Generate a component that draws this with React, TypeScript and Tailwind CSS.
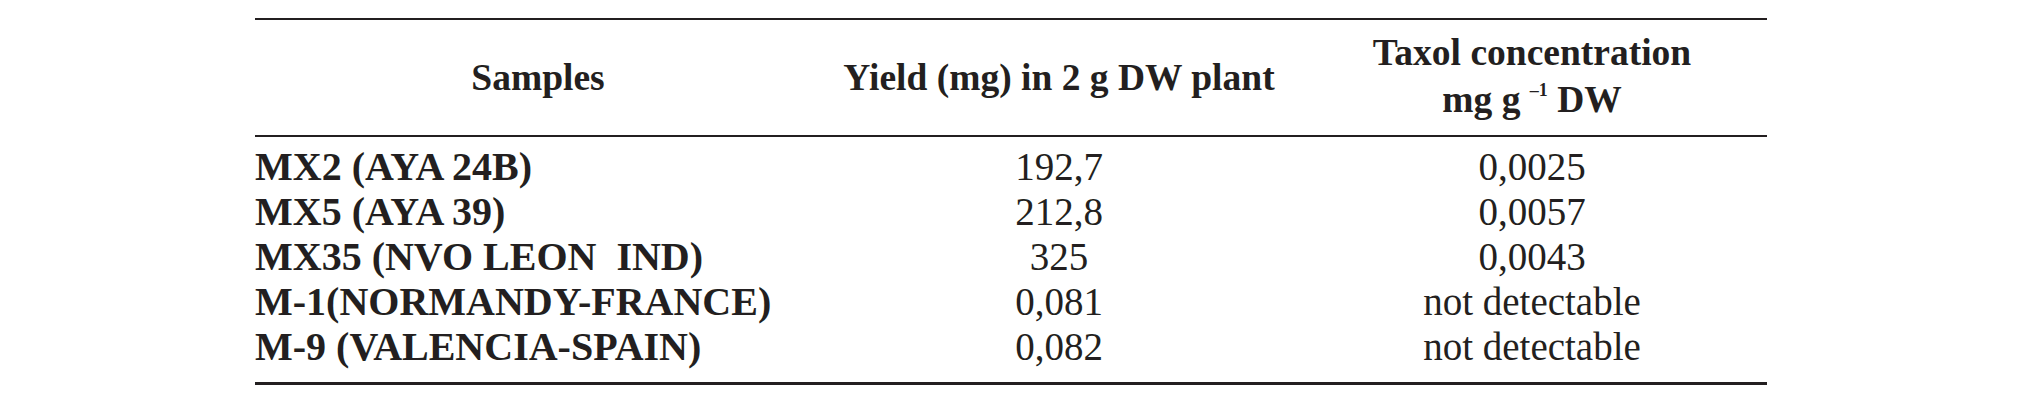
import React from "react";

const rows = [
  { s: "MX2 (AYA 24B)", y: "192,7", t: "0,0025" },
  { s: "MX5 (AYA 39)", y: "212,8", t: "0,0057" },
  { s: "MX35 (NVO LEON  IND)", y: "325", t: "0,0043" },
  { s: "M-1(NORMANDY-FRANCE)", y: "0,081", t: "not detectable" },
  { s: "M-9 (VALENCIA-SPAIN)", y: "0,082", t: "not detectable" },
];

export default function App() {
  return (
    <div className="w-[2018px] h-[401px] bg-white pt-[18px] pl-[255px] text-[#231f20] font-['Liberation_Serif',serif]">
      <div className="w-[1512px] border-t-2 border-b-[3px] border-[#231f20]">
        <div className="grid grid-cols-[566px_476px_470px] h-[117px] border-b-2 border-[#231f20] font-bold text-[37.5px] leading-[47px]">
          <div className="flex items-center justify-center">Samples</div>
          <div className="flex items-center justify-center">Yield (mg) in 2 g DW plant</div>
          <div className="flex flex-col items-center justify-center pb-[4px]">
            <div>Taxol concentration</div>
            <div className="whitespace-pre">
              mg g <span className="text-[18px] leading-none align-[0.9em]">–1</span> DW
            </div>
          </div>
        </div>
        <div className="pt-[7px] pb-[13px] text-[39px] leading-[45px]">
          {rows.map((r) => (
            <div key={r.s} className="grid grid-cols-[566px_476px_470px] items-baseline">
              <div className="font-bold whitespace-pre text-[40px]">{r.s}</div>
              <div className="text-center">{r.y}</div>
              <div className="text-center">{r.t}</div>
            </div>
          ))}
        </div>
      </div>
    </div>
  );
}
